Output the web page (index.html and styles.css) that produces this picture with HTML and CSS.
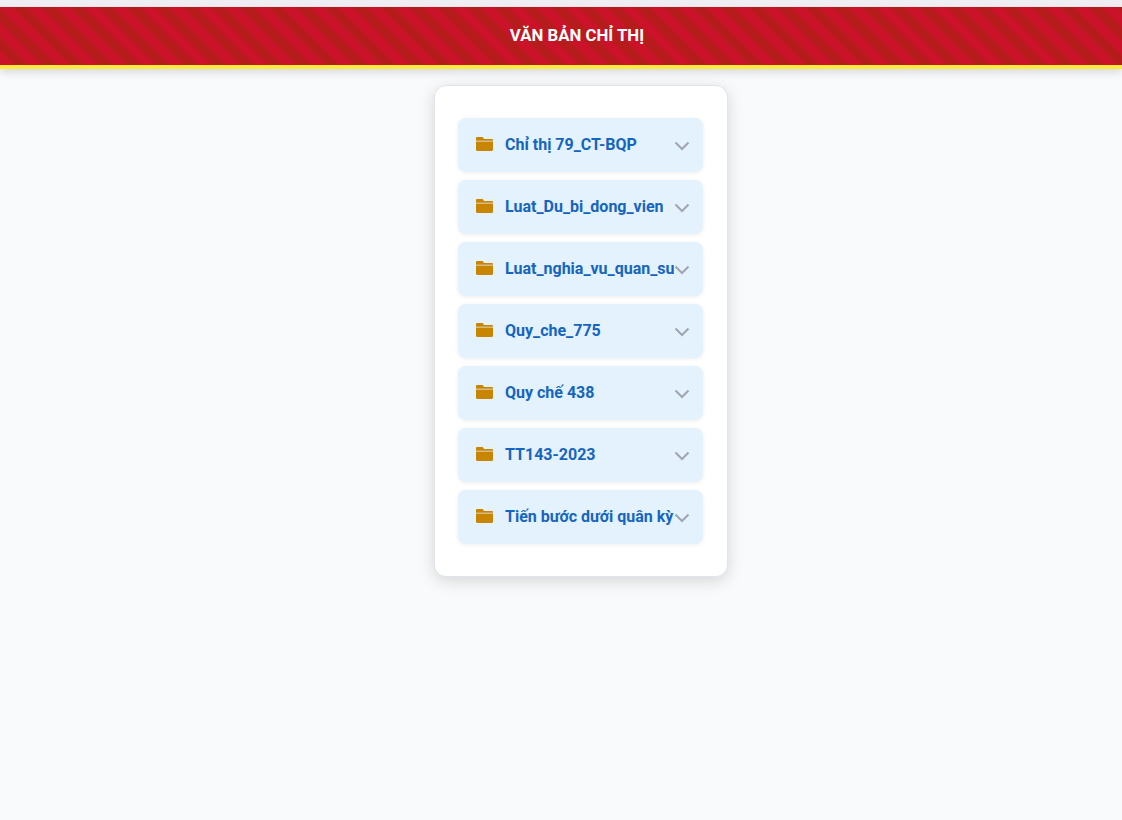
FILE: index.html
```html
<!DOCTYPE html>
<html lang="en">
<head>
    <meta charset="UTF-8">
    <meta name="viewport" content="width=device-width, initial-scale=1.0">
    <title>Văn bản chỉ thị</title>
    <link rel="stylesheet" href="styles.css">
</head>
<body>
    <div class="header">
        <h1 class="header-title">VĂN BẢN CHỈ THỊ</h1>
    </div>

    <div class="main">
        <div class="card">
            <div class="folder">
                <svg class="folder-icon" viewBox="0 0 17 14"><path d="M0 1.2C0 .5.5 0 1.200 0h5c.4 0 .8.2 1 .5L8 2h7.800c.7 0 1.200.5 1.200 1.200v.5H0zM0 4.400h17v8.400c0 .7-.5 1.200-1.200 1.200H1.200C.5 14 0 13.500 0 12.800z"/></svg>
                <span class="folder-name">Chỉ thị 79_CT-BQP</span>
                <svg class="chevron" viewBox="0 0 16 10"><path d="M1.500 1.500 8 8l6.500-6.500"/></svg>
            </div>
            <div class="folder">
                <svg class="folder-icon" viewBox="0 0 17 14"><path d="M0 1.2C0 .5.5 0 1.200 0h5c.4 0 .8.2 1 .5L8 2h7.800c.7 0 1.200.5 1.200 1.200v.5H0zM0 4.400h17v8.400c0 .7-.5 1.200-1.200 1.200H1.200C.5 14 0 13.500 0 12.800z"/></svg>
                <span class="folder-name">Luat_Du_bi_dong_vien</span>
                <svg class="chevron" viewBox="0 0 16 10"><path d="M1.500 1.500 8 8l6.500-6.500"/></svg>
            </div>
            <div class="folder">
                <svg class="folder-icon" viewBox="0 0 17 14"><path d="M0 1.2C0 .5.5 0 1.200 0h5c.4 0 .8.2 1 .5L8 2h7.800c.7 0 1.200.5 1.200 1.200v.5H0zM0 4.400h17v8.400c0 .7-.5 1.200-1.200 1.200H1.200C.5 14 0 13.500 0 12.800z"/></svg>
                <span class="folder-name">Luat_nghia_vu_quan_su</span>
                <svg class="chevron" viewBox="0 0 16 10"><path d="M1.500 1.500 8 8l6.500-6.500"/></svg>
            </div>
            <div class="folder">
                <svg class="folder-icon" viewBox="0 0 17 14"><path d="M0 1.2C0 .5.5 0 1.200 0h5c.4 0 .8.2 1 .5L8 2h7.800c.7 0 1.200.5 1.200 1.200v.5H0zM0 4.400h17v8.400c0 .7-.5 1.200-1.200 1.200H1.200C.5 14 0 13.500 0 12.800z"/></svg>
                <span class="folder-name">Quy_che_775</span>
                <svg class="chevron" viewBox="0 0 16 10"><path d="M1.500 1.500 8 8l6.500-6.500"/></svg>
            </div>
            <div class="folder">
                <svg class="folder-icon" viewBox="0 0 17 14"><path d="M0 1.2C0 .5.5 0 1.200 0h5c.4 0 .8.2 1 .5L8 2h7.800c.7 0 1.200.5 1.200 1.200v.5H0zM0 4.400h17v8.400c0 .7-.5 1.200-1.200 1.200H1.200C.5 14 0 13.500 0 12.800z"/></svg>
                <span class="folder-name">Quy chế 438</span>
                <svg class="chevron" viewBox="0 0 16 10"><path d="M1.500 1.500 8 8l6.500-6.500"/></svg>
            </div>
            <div class="folder">
                <svg class="folder-icon" viewBox="0 0 17 14"><path d="M0 1.2C0 .5.5 0 1.200 0h5c.4 0 .8.2 1 .5L8 2h7.800c.7 0 1.200.5 1.200 1.200v.5H0zM0 4.400h17v8.400c0 .7-.5 1.200-1.200 1.200H1.200C.5 14 0 13.500 0 12.800z"/></svg>
                <span class="folder-name">TT143-2023</span>
                <svg class="chevron" viewBox="0 0 16 10"><path d="M1.500 1.500 8 8l6.500-6.500"/></svg>
            </div>
            <div class="folder">
                <svg class="folder-icon" viewBox="0 0 17 14"><path d="M0 1.2C0 .5.5 0 1.200 0h5c.4 0 .8.2 1 .5L8 2h7.800c.7 0 1.200.5 1.200 1.200v.5H0zM0 4.400h17v8.400c0 .7-.5 1.200-1.200 1.200H1.200C.5 14 0 13.500 0 12.800z"/></svg>
                <span class="folder-name">Tiến bước dưới quân kỳ</span>
                <svg class="chevron" viewBox="0 0 16 10"><path d="M1.500 1.500 8 8l6.500-6.500"/></svg>
            </div>
        </div>
    </div>
</body>
</html>
```

FILE: styles.css
```css
html {
    height: 100%;
}
body {
    margin: 0;
    padding-top: 7px;
    min-height: 100%;
    box-sizing: border-box;
    font-family: Roboto, "Liberation Sans", sans-serif;
    background: linear-gradient(#eeeef3 0, #eeeef3 7px, #f8fafc 7px);
}
.header {
    height: 56px;
    padding: 0 0 2px 32px;
    display: flex;
    align-items: center;
    justify-content: center;
    background: repeating-linear-gradient(45deg, #ca1228 0, #ca1228 10px, #b71c1c 10px, #b71c1c 20px);
    border-bottom: 4px solid #ffeb3b;
    box-shadow: 0 4px 8px rgba(0,0,0,0.12);
}
.header-title {
    margin: 0;
    font-size: 16.8px;
    font-weight: 700;
    color: #fff;
}
.main {
    display: flex;
    justify-content: center;
    padding: 16px 0 0 40px;
}
.card {
    width: 294px;
    box-sizing: border-box;
    padding: 32px 24px 32px 23px;
    display: flex;
    flex-direction: column;
    gap: 8px;
    background: #fff;
    border: 1px solid #e2e4ea;
    border-radius: 12px;
    box-shadow: 0 4px 16px rgba(0,0,0,0.15);
}
.folder {
    height: 54px;
    box-sizing: border-box;
    padding: 0 13px 2px 18px;
    display: flex;
    align-items: center;
    background: #e3f2fd;
    border-radius: 8px;
    box-shadow: 0 1px 4px rgba(0,0,0,0.07);
}
.folder-icon {
    width: 17px;
    height: 14px;
    flex-shrink: 0;
    margin-right: 12px;
    fill: #c88500;
}
.folder-name {
    flex: 1;
    min-width: 0;
    overflow: hidden;
    white-space: nowrap;
    font-size: 16px;
    font-weight: 700;
    color: #1565c0;
}
.chevron {
    width: 16px;
    height: 10px;
    flex-shrink: 0;
    margin-top: 4px;
    fill: none;
    stroke: #a0a4b4;
    stroke-width: 2;
}
```
